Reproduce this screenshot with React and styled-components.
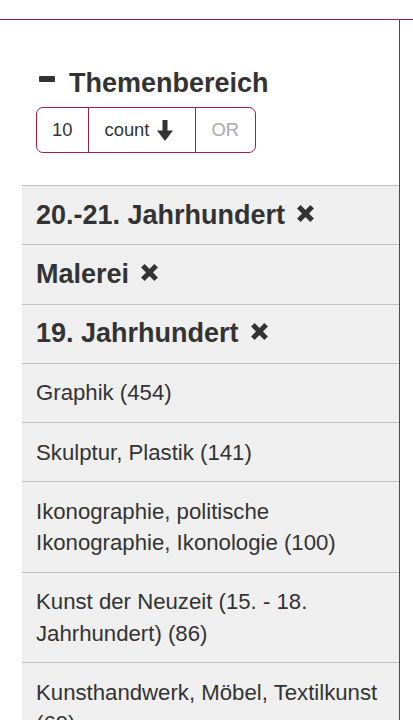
import styled, { createGlobalStyle } from "styled-components";

const GlobalStyle = createGlobalStyle`
  body {
    margin: 0;
    background: #fff;
    font-family: "Liberation Sans", Arial, sans-serif;
    color: #333;
  }
`;

const facets = [
  { label: "20.-21. Jahrhundert", selected: true },
  { label: "Malerei", selected: true },
  { label: "19. Jahrhundert", selected: true },
  { label: "Graphik (454)" },
  { label: "Skulptur, Plastik (141)" },
  { label: "Ikonographie, politische Ikonographie, Ikonologie (100)" },
  { label: "Kunst der Neuzeit (15. - 18. Jahrhundert) (86)" },
  { label: "Kunsthandwerk, Möbel, Textilkunst (69)" },
];

function RemoveIcon() {
  return (
    <RemoveGlyph width="17" height="17" viewBox="0 0 17 17" aria-hidden="true">
      <path
        d="M3.6 3.6 L13.4 13.4 M13.4 3.6 L3.6 13.4"
        stroke="#333"
        strokeWidth="5"
        strokeLinecap="square"
      />
    </RemoveGlyph>
  );
}

function ArrowDown() {
  return (
    <ArrowGlyph width="16" height="21" viewBox="0 0 16 21" aria-hidden="true">
      <rect x="5.5" y="0" width="5" height="12" fill="#333" />
      <polygon points="0,10.5 16,10.5 8,21" fill="#333" />
    </ArrowGlyph>
  );
}

export default function App() {
  return (
    <>
      <GlobalStyle />
      <Page>
        <Sidebar>
          <Heading>
            <Minus />
            Themenbereich
          </Heading>
          <ButtonGroup>
            <GroupButton>10</GroupButton>
            <GroupButton>
              count
              <ArrowDown />
            </GroupButton>
            <GroupButton $muted>OR</GroupButton>
          </ButtonGroup>
          <FacetList>
            {facets.map((f) => (
              <FacetRow key={f.label} $selected={f.selected}>
                {f.label}
                {f.selected && <RemoveIcon />}
              </FacetRow>
            ))}
          </FacetList>
        </Sidebar>
        <Aside />
      </Page>
    </>
  );
}

const Page = styled.div`
  margin-top: 19px;
  border-top: 1px solid #a91d3f;
  display: flex;
  min-height: 701px;
`;

const Sidebar = styled.div`
  width: 400px;
  box-sizing: border-box;
  border-right: 1px solid #a91d3f;
  padding: 48px 0 0 22px;
`;

const Aside = styled.div`
  flex: 1;
`;

const Heading = styled.h2`
  margin: 0 0 0 14px;
  font-size: 27px;
  line-height: 31px;
  font-weight: bold;
  color: #333;
`;

const Minus = styled.span`
  display: inline-block;
  width: 16px;
  height: 6px;
  margin: 0 14px 0 3px;
  border-radius: 1px;
  background: #333;
  vertical-align: 10px;
`;

const ButtonGroup = styled.div`
  display: inline-flex;
  margin: 8px 0 0 14px;
  border: 1px solid #a91d3f;
  border-radius: 7px;
  overflow: hidden;
`;

const GroupButton = styled.div`
  display: flex;
  align-items: center;
  height: 44px;
  padding: 0 16px 0 15px;
  font-size: 18.4px;
  color: ${(p) => (p.$muted ? "#aaa" : "#333")};
  & + & {
    border-left: 1px solid #a91d3f;
  }
`;

const ArrowGlyph = styled.svg`
  margin: 1px 6px 0 8px;
`;

const FacetList = styled.div`
  margin-top: 32px;
`;

const FacetRow = styled.div`
  background: #efefef;
  border-top: 1px solid #c2c2c2;
  padding: 13.5px 14px;
  line-height: 31.25px;
  font-size: ${(p) => (p.$selected ? "27px" : "22.2px")};
  font-weight: ${(p) => (p.$selected ? "bold" : "normal")};
  color: #333;
`;

const RemoveGlyph = styled.svg`
  margin-left: 12px;
  vertical-align: 2px;
`;
